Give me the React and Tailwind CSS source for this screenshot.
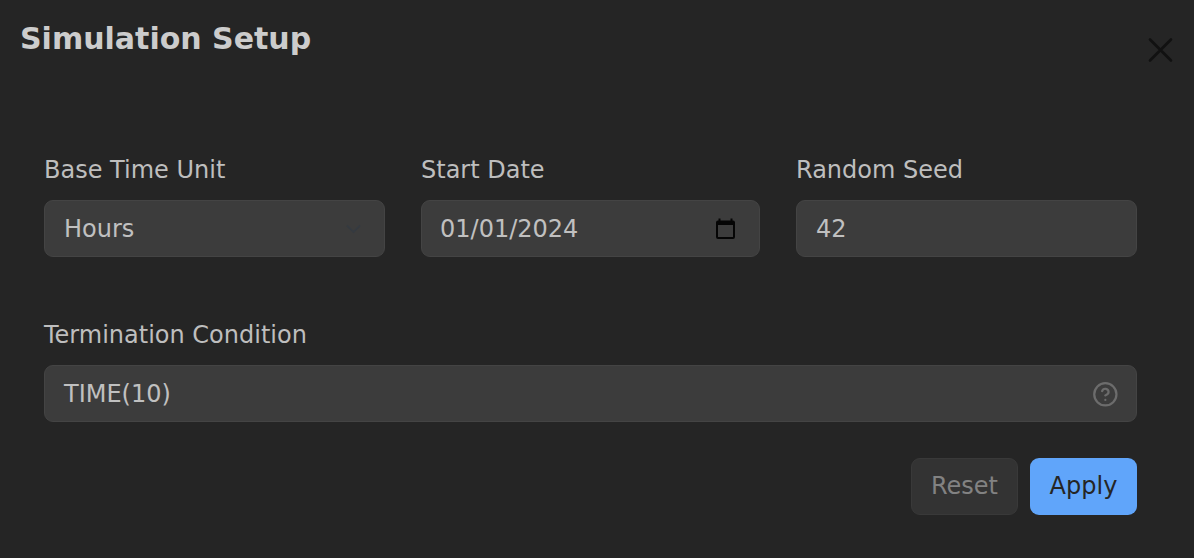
const box = "flex h-[57px] items-center rounded-[9px] border border-[#444444] bg-[#3c3c3c] px-[19px] text-[24px] leading-[28px] text-[#c0c0c0]";

function Field({ label, children }) {
  return (
    <div className="flex flex-col">
      <div className="mb-[14px] mt-px h-[32px] text-[24px] leading-[32px] text-[#bebebe]">{label}</div>
      <div className={box}>{children}</div>
    </div>
  );
}

export default function App() {
  return (
    <div className="h-[558px] w-[1194px] overflow-hidden bg-[#252525] font-['DejaVu_Sans',sans-serif]">
      <header className="flex h-[153px] items-start justify-between pl-[20px] pr-[20px]">
        <h1 className="mt-[21px] text-[30px] font-bold leading-[36px] text-[#cccccc]">Simulation Setup</h1>
        <svg className="mt-[37px]" width="27" height="27" viewBox="0 0 27 27" fill="none" stroke="#111111" strokeWidth="2.6" strokeLinecap="round">
          <path d="M3 2.5L24 23.5M24 2.5L3 23.5" />
        </svg>
      </header>
      <main className="pl-[44px] pr-[57px]">
        <div className="grid grid-cols-[341px_339px_341px] gap-x-[36px]">
          <Field label="Base Time Unit">
            <span>Hours</span>
            <svg className="ml-auto mr-[3px] mt-px" width="16" height="10" viewBox="0 0 16 10" fill="none" stroke="#353a40" strokeWidth="1.9">
              <path d="M1 1.5l6.5 6.5 6.5-6.5" />
            </svg>
          </Field>
          <Field label="Start Date">
            <span className="-ml-px">01/01/2024</span>
            <svg className="ml-auto mr-[4px] mt-px" width="20" height="22" viewBox="0 0 20 22">
              <path fill="#050505" fillRule="evenodd" d="M2.500 .5h2v2h10v-2h2v2h.5a2 2 0 0 1 2 2v14.5a2 2 0 0 1-2 2h-15a2 2 0 0 1-2-2V4.500a2 2 0 0 1 2-2h.5zM2 7v12h15V7z" />
            </svg>
          </Field>
          <Field label="Random Seed"><span>42</span></Field>
        </div>
        <div className="mt-[61px]">
          <Field label="Termination Condition">
            <span>TIME(10)</span>
            <svg className="-mr-[2px] ml-auto mt-px" width="26.7" height="26.7" viewBox="0 0 24 24" fill="none" stroke="#6c6c6c" strokeWidth="2" strokeLinecap="round" strokeLinejoin="round">
              <circle cx="12" cy="12" r="10" />
              <path d="M9.09 9a3 3 0 0 1 5.83 1c0 2-3 3-3 3M12 17h.01" />
            </svg>
          </Field>
        </div>
        <div className="mt-[36px] flex justify-end gap-[12px]">
          <button className="h-[57px] w-[107px] rounded-[9px] border border-[#393939] bg-[#333333] pb-px text-[24px] text-[#828282]">Reset</button>
          <button className="h-[57px] w-[107px] rounded-[9px] bg-[#60a5fa] pb-px text-[24px] text-[#252525]">Apply</button>
        </div>
      </main>
    </div>
  );
}
